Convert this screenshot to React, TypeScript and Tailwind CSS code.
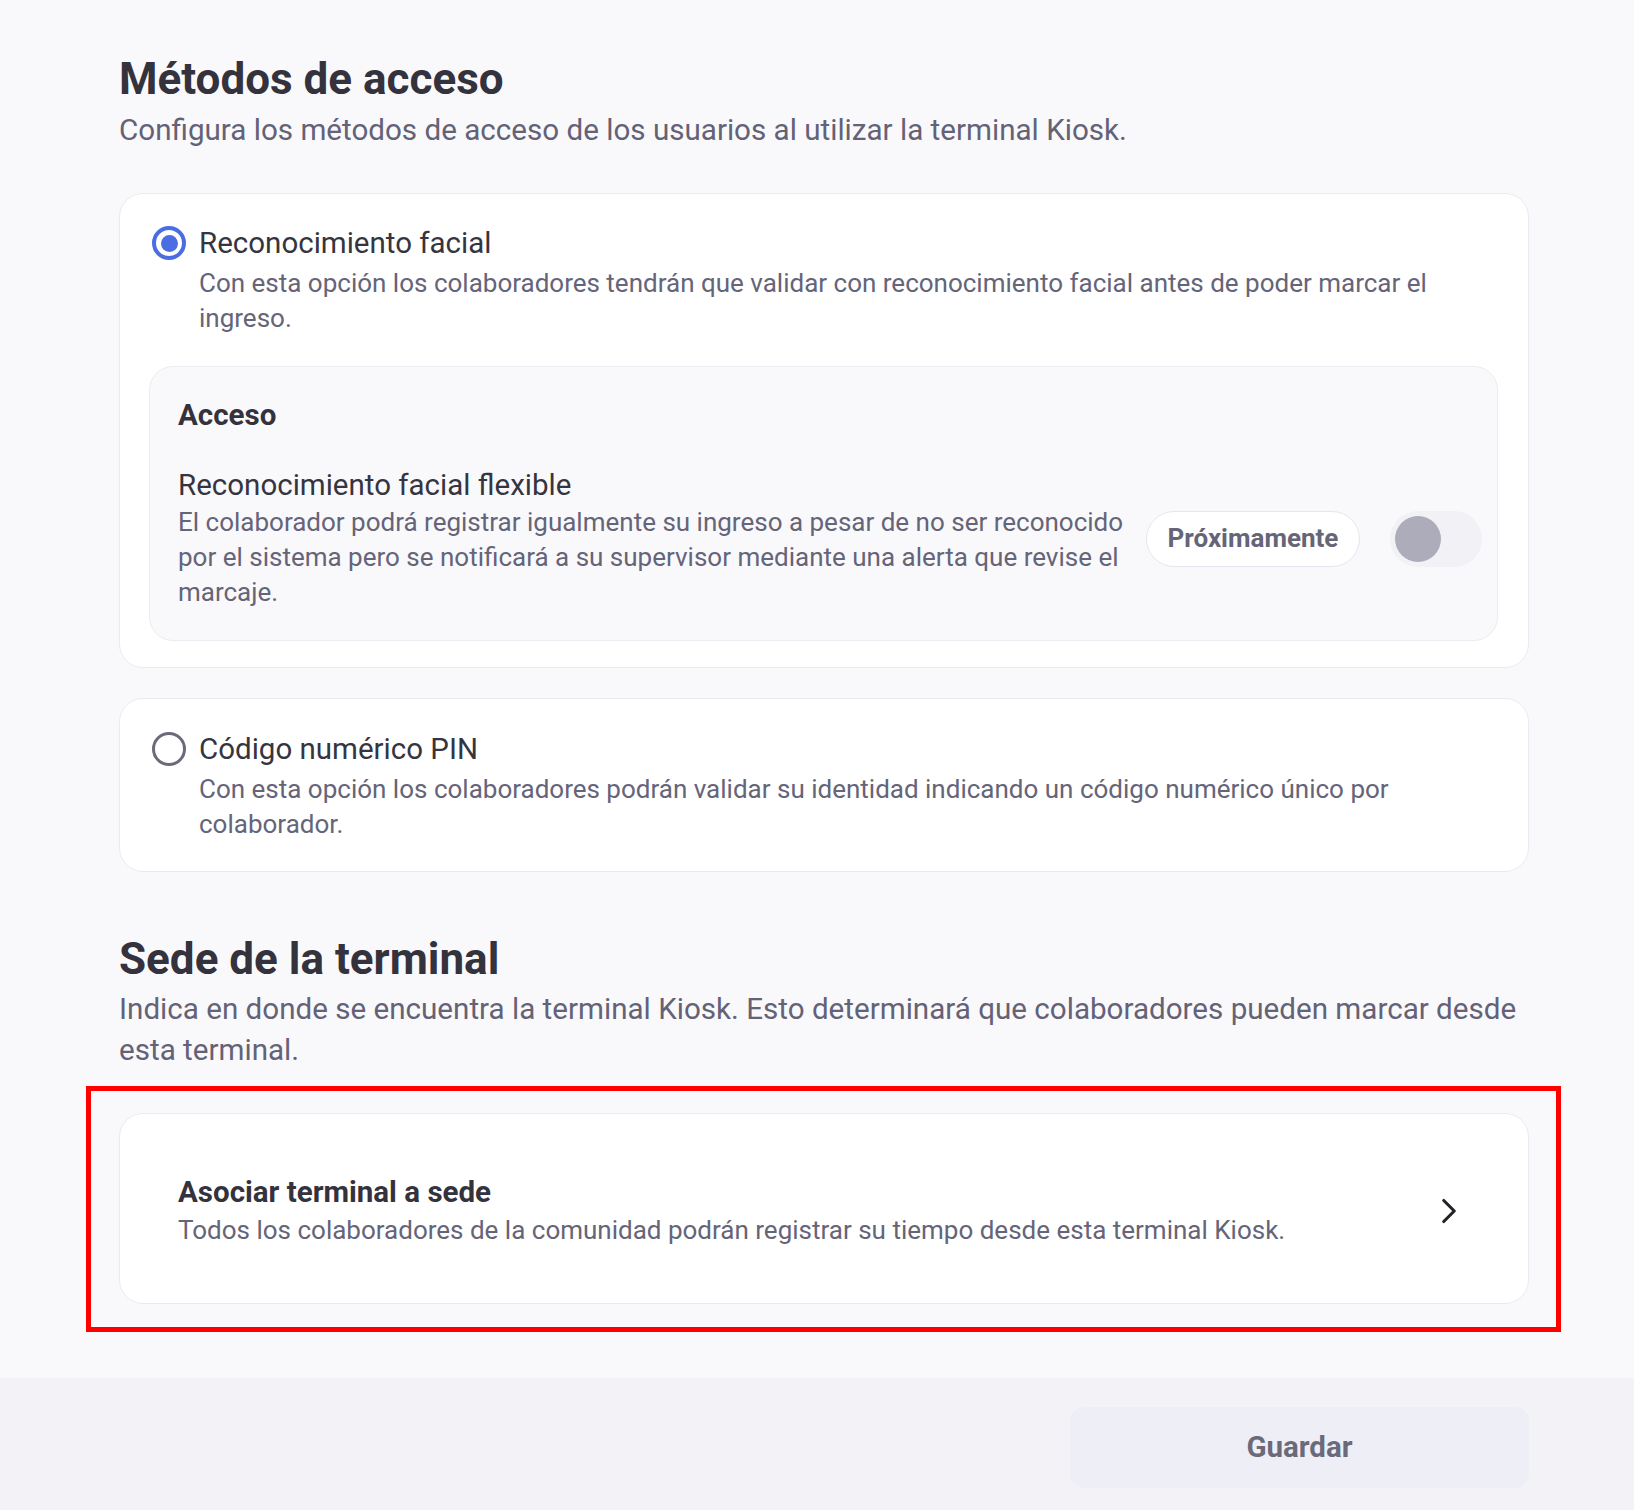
import { ChevronRight } from 'lucide-react'

function Radio({ checked }: { checked: boolean }) {
  if (checked) {
    return (
      <div className="flex h-[34px] w-[34px] shrink-0 items-center justify-center rounded-full border-[4px] border-[#4b6de4]">
        <div className="h-[17px] w-[17px] rounded-full bg-[#4b6de4]" />
      </div>
    )
  }
  return <div className="h-[34px] w-[34px] shrink-0 rounded-full border-[3px] border-[#6b6a7a]" />
}

export default function App() {
  return (
    <div
      className="flex min-h-[1510px] flex-col bg-[#f9f9fc] text-[#36353f]"
      style={{ fontFamily: 'Roboto, "Noto Sans", sans-serif' }}
    >
      <div className="pl-[119px] pt-[53px]">
        <div className="w-[1410px]">
          {/* Métodos de acceso */}
          <h1 className="text-[44px] font-bold leading-[52px] text-[#34333d]">Métodos de acceso</h1>
          <p className="mt-[5px] text-[29.6px] leading-[40px] text-[#636276]">
            Configura los métodos de acceso de los usuarios al utilizar la terminal Kiosk.
          </p>

          <div className="mt-[43px] rounded-[24px] border border-[#ebeaf2] bg-white pb-[26px] pl-[32px] pr-[30px] pt-[29px]">
            <div className="flex items-start gap-[13px]">
              <div className="mt-[3px]">
                <Radio checked />
              </div>
              <div>
                <div className="text-[29.5px] leading-[40px] text-[#36353f]">Reconocimiento facial</div>
                <div className="mt-[3px] text-[26px] leading-[35px] text-[#656478]">
                  Con esta opción los colaboradores tendrán que validar con reconocimiento facial antes de poder marcar el
                  ingreso.
                </div>
              </div>
            </div>

            <div className="-ml-[3px] mt-[30px] rounded-[24px] border border-[#ebebf2] bg-[#f9f9fc] pb-[30px] pl-[28px] pr-[15px] pt-[30px]">
              <div className="text-[29.5px] font-bold leading-[36px] text-[#34333d]">Acceso</div>
              <div className="mt-[34px] flex items-center gap-[20px]">
                <div className="flex-1">
                  <div className="text-[29.5px] leading-[36px] text-[#36353f]">Reconocimiento facial flexible</div>
                  <div className="mt-[2px] text-[26px] leading-[35px] text-[#656478]">
                    El colaborador podrá registrar igualmente su ingreso a pesar de no ser reconocido por el sistema pero se
                    notificará a su supervisor mediante una alerta que revise el marcaje.
                  </div>
                </div>
                <div className="flex items-center gap-[30px]">
                  <div className="flex h-[56px] w-[214px] items-center justify-center rounded-full border border-[#e6e5ee] bg-white text-[26px] font-bold text-[#666578]">
                    Próximamente
                  </div>
                  <div className="flex h-[56px] w-[92px] items-center rounded-full bg-[#f2f1f6] px-[5px]">
                    <div className="h-[46px] w-[46px] rounded-full bg-[#adacbb]" />
                  </div>
                </div>
              </div>
            </div>
          </div>

          <div className="mt-[30px] rounded-[24px] border border-[#ebeaf2] bg-white pb-[29px] pl-[32px] pr-[30px] pt-[30px]">
            <div className="flex items-start gap-[13px]">
              <div className="mt-[3px]">
                <Radio checked={false} />
              </div>
              <div>
                <div className="text-[29.5px] leading-[40px] text-[#36353f]">Código numérico PIN</div>
                <div className="mt-[3px] text-[26px] leading-[35px] text-[#656478]">
                  Con esta opción los colaboradores podrán validar su identidad indicando un código numérico único por
                  colaborador.
                </div>
              </div>
            </div>
          </div>

          {/* Sede de la terminal */}
          <h2 className="mt-[61px] text-[44px] font-bold leading-[52px] text-[#34333d]">Sede de la terminal</h2>
          <p className="mt-[4px] text-[29.6px] leading-[41px] text-[#636276]">
            Indica en donde se encuentra la terminal Kiosk. Esto determinará que colaboradores pueden marcar desde esta
            terminal.
          </p>

          <div className="relative mt-[42px]">
            <div className="flex h-[191px] items-center rounded-[24px] border border-[#ebeaf2] bg-white pl-[58px] pr-[58px] pt-[4px]">
              <div className="flex-1">
                <div className="text-[29.5px] font-bold leading-[36px] text-[#34333d]">Asociar terminal a sede</div>
                <div className="mt-[2px] text-[26px] leading-[36px] text-[#656478]">
                  Todos los colaboradores de la comunidad podrán registrar su tiempo desde esta terminal Kiosk.
                </div>
              </div>
              <ChevronRight size={42} strokeWidth={1.8} className="text-[#222228]" />
            </div>
            {/* annotation box */}
            <div className="pointer-events-none absolute -bottom-[28px] -left-[33px] -right-[32px] -top-[27px] border-[5px] border-[#ff0000]" />
          </div>
        </div>
      </div>

      {/* footer */}
      <div className="mt-[74px] flex flex-1 justify-end bg-[#f3f3f7] pb-[20px] pr-[105px] pt-[29px]">
        <button className="h-[81px] w-[459px] rounded-[14px] bg-[#eeeef6] text-[29.5px] font-bold text-[#6b6a7b]">
          Guardar
        </button>
      </div>
    </div>
  )
}
